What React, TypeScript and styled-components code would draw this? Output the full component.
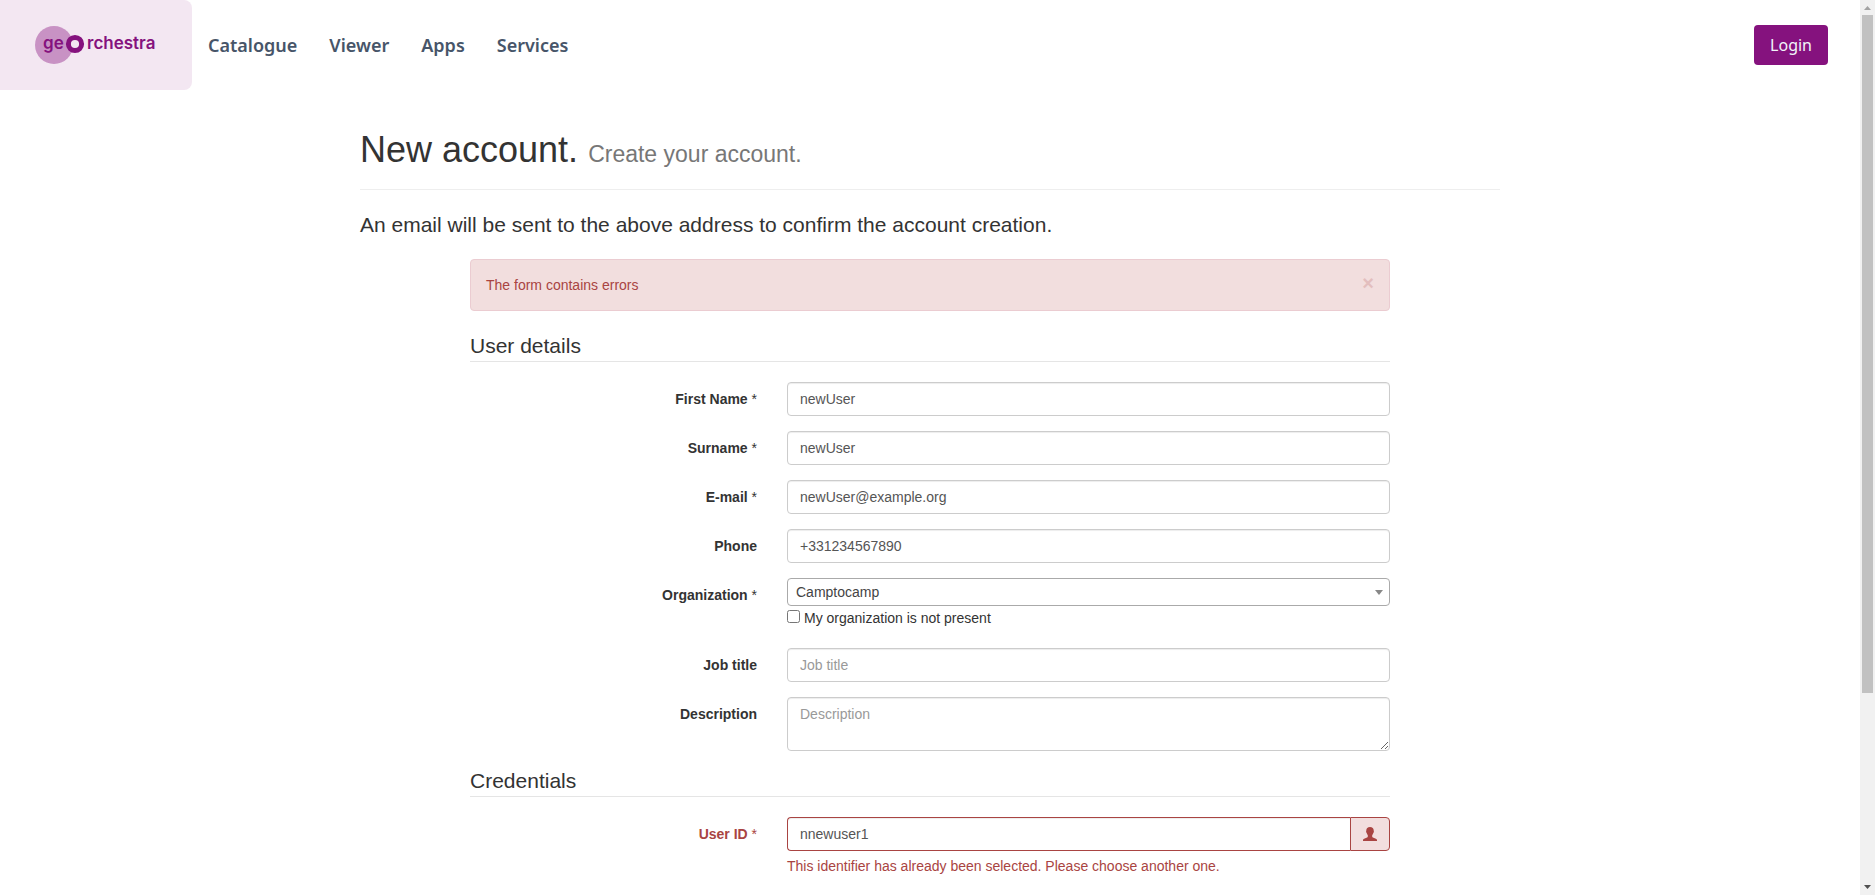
import React from "react";
import styled, { createGlobalStyle, css } from "styled-components";

const GlobalStyle = createGlobalStyle`
  *, *::before, *::after { box-sizing: border-box; }
  body {
    margin: 0;
    background: #fff;
    color: #333;
    font-family: "Liberation Sans", Arial, sans-serif;
    font-size: 14px;
    line-height: 20px;
  }
`;

const Shell = styled.div`
  display: flex;
  height: 100vh;
`;

const Page = styled.div`
  flex: 1;
  min-width: 0;
  overflow-y: auto;
  scrollbar-width: none;
`;

const ScrollTrack = styled.div`
  display: flex;
  flex-direction: column;
  flex: 0 0 15px;
  background: #f1f1f1;
`;

const ScrollArrow = styled.svg`
  display: block;
  flex: none;
  width: 15px;
  height: 15px;
`;

const ScrollRail = styled.div`
  flex: 1;
  padding: 0 2px;
`;

const ScrollThumb = styled.div`
  height: 78.4%;
  background: #c1c1c1;
`;

const Header = styled.header`
  display: flex;
  align-items: center;
  height: 90px;
  padding-right: 32px;
  font-family: "Noto Sans", sans-serif;
`;

const LogoLink = styled.a`
  flex: none;
  width: 192px;
  height: 90px;
  border-radius: 0 8px 8px 0;
  background: #f3e7f2;
`;

const Nav = styled.nav`
  display: flex;
  flex: 1;
  gap: 32px;
  padding-left: 16px;
`;

const NavLink = styled.a`
  color: #475569;
  font-size: 18px;
  font-weight: 600;
  line-height: 28px;
  text-decoration: none;
`;

const LoginLink = styled.a`
  padding: 8px 16px;
  border-radius: 4px;
  background: #85127e;
  color: #f1f5f9;
  font-size: 16px;
  line-height: 24px;
  text-decoration: none;
`;

const Container = styled.main`
  max-width: 1170px;
  margin: 0 auto;
  padding: 40px 15px 60px;
`;

const PageTitle = styled.h1`
  margin: 0 0 20px;
  padding-bottom: 19px;
  border-bottom: 1px solid #eee;
  font-size: 36px;
  font-weight: 500;
  line-height: 40px;
`;

const Subtitle = styled.small`
  color: #777;
  font-size: 23px;
  font-weight: 400;
  line-height: 23px;
`;

const Lead = styled.p`
  margin: 0 0 20px;
  font-size: 21px;
  line-height: 29px;
`;

const Form = styled.form`
  max-width: 920px;
  margin: 0 auto;
`;

const Alert = styled.div`
  display: flex;
  align-items: flex-start;
  justify-content: space-between;
  margin-bottom: 20px;
  padding: 15px;
  border: 1px solid #ebccd1;
  border-radius: 4px;
  background: #f2dede;
  color: #a94442;
`;

const CloseButton = styled.button`
  padding: 0;
  border: 0;
  background: none;
  color: inherit;
  font: bold 20px/16px "Liberation Sans", Arial, sans-serif;
  opacity: 0.2;
`;

const Section = styled.fieldset`
  min-width: 0;
  margin: 0;
  padding: 0;
  border: 0;
`;

const Legend = styled.legend`
  display: block;
  width: 100%;
  margin-bottom: 20px;
  padding: 0;
  border-bottom: 1px solid #e5e5e5;
  font-size: 21px;
  line-height: 30px;
`;

const Row = styled.div`
  display: grid;
  grid-template-columns: 287px 1fr;
  column-gap: 30px;
  align-items: start;
  margin-bottom: 15px;
`;

const Label = styled.label<{ $error?: boolean }>`
  padding-top: 7px;
  color: ${(p) => (p.$error ? "#a94442" : "#333")};
  font-weight: 700;
  text-align: right;
`;

const Star = styled.span`
  font-weight: 400;
`;

const control = css`
  display: block;
  width: 100%;
  padding: 6px 12px;
  border: 1px solid #ccc;
  border-radius: 4px;
  background: #fff;
  box-shadow: inset 0 1px 1px rgba(0, 0, 0, 0.075);
  color: #555;
  font: 14px/20px "Liberation Sans", Arial, sans-serif;
  &::placeholder { color: #999; opacity: 1; }
`;

const Input = styled.input<{ $error?: boolean }>`
  ${control}
  height: 34px;
  ${(p) => p.$error && css`
    border-color: #a94442;
    border-right-width: 0;
    border-radius: 4px 0 0 4px;
  `}
`;

const TextArea = styled.textarea`
  ${control}
  height: 54px;
  resize: vertical;
`;

const SelectBox = styled.div`
  position: relative;
  &::after {
    content: "";
    position: absolute;
    top: 12px;
    right: 7px;
    border: solid transparent;
    border-width: 5px 4px 0;
    border-top-color: #888;
    pointer-events: none;
  }
`;

const Select = styled.select`
  display: block;
  width: 100%;
  height: 28px;
  padding: 0 20px 0 8px;
  appearance: none;
  border: 1px solid #aaa;
  border-radius: 4px;
  background: #fff;
  color: #444;
  font: 14px/26px "Liberation Sans", Arial, sans-serif;
`;

const CheckLabel = styled.label`
  display: flex;
  align-items: flex-start;
  gap: 4px;
  padding: 2px 0 5px;
`;

const Checkbox = styled.input`
  width: 13px;
  height: 13px;
  margin: 2px 0 0;
`;

const InputGroup = styled.div`
  display: flex;
`;

const Addon = styled.span`
  display: flex;
  flex: 0 0 40px;
  align-items: center;
  justify-content: center;
  border: 1px solid #a94442;
  border-radius: 0 4px 4px 0;
  background: #f2dede;
  color: #a94442;
`;

const HelpText = styled.span`
  display: block;
  margin-top: 5px;
  color: #a94442;
`;

const navItems = ["Catalogue", "Viewer", "Apps", "Services"];

const identityFields = [
  { id: "firstName", label: "First Name", required: true, value: "newUser" },
  { id: "surname", label: "Surname", required: true, value: "newUser" },
  { id: "email", label: "E-mail", required: true, value: "newUser@example.org" },
  { id: "phone", label: "Phone", required: false, value: "+331234567890" },
];

function Logo() {
  return (
    <svg width="192" height="90" viewBox="0 0 192 90" role="img" aria-label="geOrchestra">
      <circle cx="54" cy="45" r="19" fill="#c892c4" />
      <circle cx="75" cy="44" r="6.6" fill="#f3e7f2" stroke="#85127e" strokeWidth="5" />
      <g fill="#85127e" fontFamily="Inter, sans-serif" fontSize="17" fontWeight="600">
        <text x="43" y="49">ge</text>
        <text x="87" y="49">rchestra</text>
      </g>
    </svg>
  );
}

function UserIcon() {
  return (
    <svg width="14" height="14" viewBox="0 0 14 14" fill="currentColor" aria-hidden="true">
      <path d="M7 0C4.6 0 3.300 1.300 3.300 3.500c0 .4-.3.600-.2 1.200.1.600.3 1 .6 1.200.2 1 .6 1.700 1.100 2.200v1.500c0 .6-.5.9-1.300 1.200C1.900 11.400 0 12 0 12.900V14h14v-1.100c0-.9-1.900-1.500-3.500-2.100-.8-.3-1.300-.6-1.300-1.200V8.100c.5-.5.9-1.200 1.100-2.200.3-.2.5-.6.6-1.200.1-.6-.2-.8-.2-1.200C10.700 1.300 9.400 0 7 0z" />
    </svg>
  );
}

function FieldLabel({ id, text, required, error }: { id: string; text: string; required?: boolean; error?: boolean }) {
  return (
    <Label htmlFor={id} $error={error}>
      {text}
      {required && <Star> *</Star>}
    </Label>
  );
}

export default function App() {
  return (
    <>
      <GlobalStyle />
      <Shell>
        <Page>
          <Header>
            <LogoLink href="#home"><Logo /></LogoLink>
            <Nav>
              {navItems.map((item) => (
                <NavLink key={item} href={`#${item.toLowerCase()}`}>{item}</NavLink>
              ))}
            </Nav>
            <LoginLink href="#login">Login</LoginLink>
          </Header>
          <Container>
            <PageTitle>
              New account. <Subtitle>Create your account.</Subtitle>
            </PageTitle>
            <Lead>An email will be sent to the above address to confirm the account creation.</Lead>
            <Form>
              <Alert role="alert">
                The form contains errors
                <CloseButton type="button" aria-label="Close">×</CloseButton>
              </Alert>
              <Section>
                <Legend>User details</Legend>
                {identityFields.map((f) => (
                  <Row key={f.id}>
                    <FieldLabel id={f.id} text={f.label} required={f.required} />
                    <Input id={f.id} type="text" defaultValue={f.value} />
                  </Row>
                ))}
                <Row>
                  <FieldLabel id="org" text="Organization" required />
                  <div>
                    <SelectBox>
                      <Select id="org" defaultValue="Camptocamp">
                        <option>Camptocamp</option>
                      </Select>
                    </SelectBox>
                    <CheckLabel>
                      <Checkbox type="checkbox" />
                      My organization is not present
                    </CheckLabel>
                  </div>
                </Row>
                <Row>
                  <FieldLabel id="title" text="Job title" />
                  <Input id="title" type="text" placeholder="Job title" />
                </Row>
                <Row>
                  <FieldLabel id="description" text="Description" />
                  <TextArea id="description" placeholder="Description" />
                </Row>
              </Section>
              <Section>
                <Legend>Credentials</Legend>
                <Row>
                  <FieldLabel id="uid" text="User ID" required error />
                  <div>
                    <InputGroup>
                      <Input id="uid" type="text" defaultValue="nnewuser1" $error />
                      <Addon><UserIcon /></Addon>
                    </InputGroup>
                    <HelpText>This identifier has already been selected. Please choose another one.</HelpText>
                  </div>
                </Row>
              </Section>
            </Form>
          </Container>
        </Page>
        <ScrollTrack aria-hidden="true">
          <ScrollArrow viewBox="0 0 15 15"><path d="M4 10h7L7.500 6z" fill="#a3a3a3" /></ScrollArrow>
          <ScrollRail><ScrollThumb /></ScrollRail>
          <ScrollArrow viewBox="0 0 15 15"><path d="M4 5h7L7.500 9z" fill="#505050" /></ScrollArrow>
        </ScrollTrack>
      </Shell>
    </>
  );
}
